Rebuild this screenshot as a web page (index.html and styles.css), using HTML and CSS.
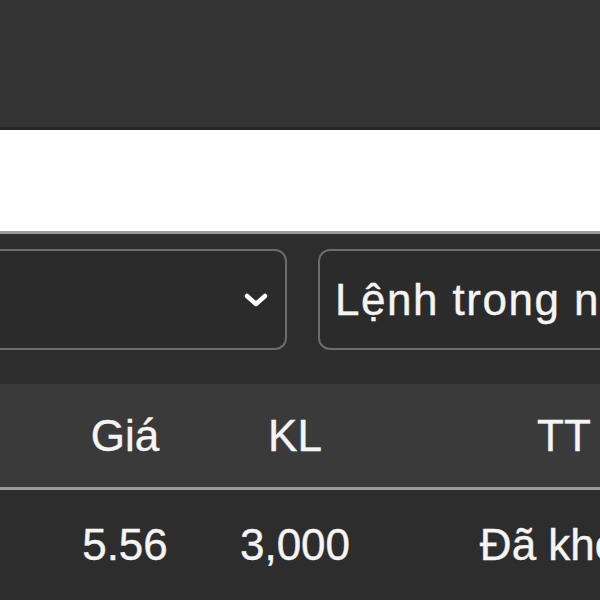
FILE: index.html
```html
<!DOCTYPE html>
<html lang="vi">
<head>
  <meta charset="UTF-8" />
  <meta name="viewport" content="width=device-width, initial-scale=1.0" />
  <title>Sổ lệnh</title>
  <link rel="stylesheet" href="styles.css">
</head>
<body>
  <div class="topbar"></div>
  <div class="banner"></div>
  <div class="panel">
    <div class="filters">
      <div class="select first">
        <svg class="chevron" viewBox="0 0 26 16" width="26" height="16">
          <path d="M4 4 L13 12 L22 4" fill="none" stroke="#fff" stroke-width="4.5" stroke-linecap="round" stroke-linejoin="round"/>
        </svg>
      </div>
      <div class="select second">
        <span class="select-text">Lệnh trong ngày</span>
      </div>
    </div>
    <div class="table">
      <div class="row head">
        <div class="cell">Giá</div>
        <div class="cell">KL</div>
        <div class="cell">TT</div>
      </div>
      <div class="row">
        <div class="cell">5.56</div>
        <div class="cell">3,000</div>
        <div class="cell">Đã khớp</div>
      </div>
    </div>
  </div>
</body>
</html>
```

FILE: styles.css
```css
body {
  margin: 0;
  width: 600px;
  height: 600px;
  overflow: hidden;
  background: #2d2d2d;
  font-family: "Liberation Sans", Arial, sans-serif;
  color: #f4f4f4;
}
.topbar {
  height: 127px;
  background: #343434;
  border-bottom: 3px solid #262626;
}
.banner {
  height: 101px;
  background: #fff;
  border-bottom: 3px solid #9a9a9a;
}
.panel {
  background: #2d2d2d;
}
.filters {
  display: flex;
  gap: 31px;
  padding: 15px 0 34px;
}
.select {
  box-sizing: border-box;
  height: 101px;
  border: 2px solid #6c6c6c;
  border-radius: 12px;
  background: #2b2b2b;
  display: flex;
  align-items: center;
  flex-shrink: 0;
}
.select.first {
  width: 327px;
  margin-left: -40px;
  justify-content: flex-end;
  padding-right: 16px;
}
.select.second {
  width: 400px;
  padding-left: 15px;
}
.select-text {
  font-size: 44px;
  letter-spacing: 1.5px;
  white-space: nowrap;
  -webkit-text-stroke: 0.4px #f4f4f4;
}
.row {
  display: grid;
  grid-template-columns: 200px 140px 398px;
  padding-left: 25px;
  width: 738px;
  align-items: center;
  font-size: 44px;
  white-space: nowrap;
  -webkit-text-stroke: 0.4px #f4f4f4;
}
.row.head {
  height: 103px;
  background: #3a3a3a;
  border-bottom: 3px solid #9c9c9c;
}
.row:not(.head) {
  height: 109px;
}
.cell {
  text-align: center;
}
```
